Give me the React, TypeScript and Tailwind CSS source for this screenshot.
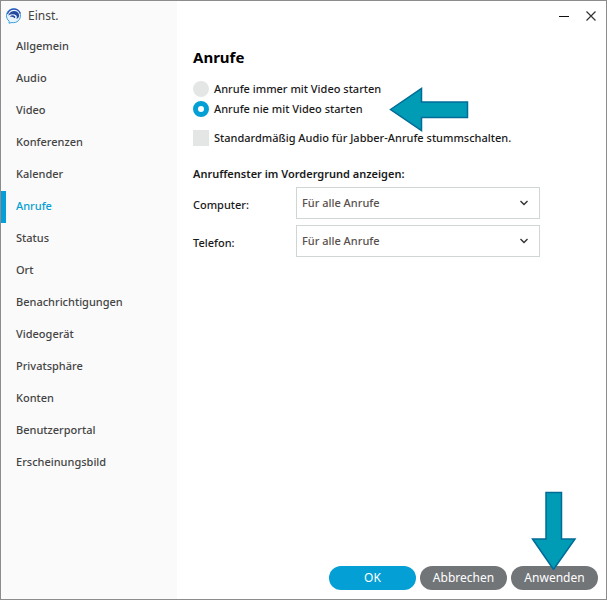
import { FC, useState } from 'react';

const sections = [
  'Allgemein',
  'Audio',
  'Video',
  'Konferenzen',
  'Kalender',
  'Anrufe',
  'Status',
  'Ort',
  'Benachrichtigungen',
  'Videogerät',
  'Privatsphäre',
  'Konten',
  'Benutzerportal',
  'Erscheinungsbild',
];

const foregroundOptions = ['Für alle Anrufe', 'Nur für Videoanrufe', 'Nie'];

const Logo: FC = () => (
  <svg className="size-4 shrink-0" viewBox="0 0 16 16" fill="none" aria-hidden="true">
    <path
      d="M3 15.2 3.2 13.2A7 7 0 1 1 6 14.5Z"
      fill="#e9f4fc"
      stroke="#3a9fdf"
      strokeWidth="1"
      strokeLinejoin="round"
    />
    <path d="M1.5 6A6.8 6.8 0 0 1 14.4 5.5" stroke="#2c4fb0" strokeWidth="1.2" />
    <path
      d="M2.2 7.4C3.4 4.4 6 3 8.6 3.1c3 .2 4.7 2.4 4.5 4.7-.1 1.7-1.2 2.8-2.8 3 .9-1.3.8-2.7-.3-3.600C8.2 5.7 5 5.9 2.2 7.4Z"
      fill="#264a9f"
    />
    <path d="M3.8 8.900C5.2 7.2 7.2 7 8.6 7.9c1 .7.9 2-.2 2.4C7.8 9.2 6 8.6 3.8 8.9Z" fill="#264a9f" />
  </svg>
);

interface RadioProps {
  label: string;
  checked: boolean;
  onChange: () => void;
}

const VideoRadio: FC<RadioProps> = ({ label, checked, onChange }) => (
  <label className="flex h-5 items-center gap-[5px]">
    <input
      type="radio"
      name="video"
      checked={checked}
      onChange={onChange}
      className="size-4 appearance-none rounded-full bg-[#e4e6e6] checked:border-5 checked:border-[#049fd4] checked:bg-white"
    />
    {label}
  </label>
);

interface SelectProps {
  id: string;
  label: string;
}

const ForegroundSelect: FC<SelectProps> = ({ id, label }) => (
  <div className="flex items-center">
    <label htmlFor={id} className="w-[103px] shrink-0 pt-1">
      {label}
    </label>
    <div className="relative max-w-[244px] flex-1">
      <select
        id={id}
        className="h-8 w-full appearance-none border border-[#d0d5d5] bg-white pr-8 pl-[5px] text-[#58504c]"
      >
        {foregroundOptions.map((option) => (
          <option key={option}>{option}</option>
        ))}
      </select>
      <svg
        className="pointer-events-none absolute top-3 right-3 h-2 w-2"
        viewBox="0 0 8 8"
        fill="none"
        stroke="#333"
        strokeWidth="1.4"
        aria-hidden="true"
      >
        <path d="M0.5 2 4 5.5 7.5 2" />
      </svg>
    </div>
  </div>
);

const App: FC = () => {
  const [active, setActive] = useState('Anrufe');
  const [withVideo, setWithVideo] = useState(false);

  return (
    <div className="flex min-h-screen border border-[#8c8c8c] bg-white font-['Noto_Sans',sans-serif] text-[11px] leading-4 font-medium text-[#1a1a1a]">
      {/* Sidebar */}
      <aside className="w-44 shrink-0 bg-[#fafafa] text-[#444]">
        <div className="flex h-[30px] items-center gap-[6px] pl-[5px]">
          <Logo />
          <span className="text-xs font-normal">Einst.</span>
        </div>
        <nav>
          {sections.map((section) => (
            <button
              key={section}
              onClick={() => setActive(section)}
              className={`block h-8 w-full border-l-5 pb-[2px] pl-[10px] text-left ${
                active === section ? 'border-[#049fd9] text-[#049fd4]' : 'border-transparent'
              }`}
            >
              {section}
            </button>
          ))}
        </nav>
      </aside>

      <div className="flex min-w-0 flex-1 flex-col">
        {/* Window controls */}
        <div className="flex h-[30px] items-center justify-end gap-[17px] pr-[10px]">
          <button aria-label="Minimieren">
            <svg className="size-[10px]" viewBox="0 0 10 10" stroke="#111" aria-hidden="true">
              <path d="M0 5.5H10" />
            </svg>
          </button>
          <button aria-label="Schließen">
            <svg className="size-[10px]" viewBox="0 0 10 10" stroke="#333" strokeWidth="1.2" aria-hidden="true">
              <path d="M0.5 0.5 9.5 9.5M9.5 0.5 0.5 9.5" />
            </svg>
          </button>
        </div>

        <main className="flex-1 px-4 pt-[14px]">
          <h1 className="mb-[10px] text-[15px] leading-6 font-bold text-black">{active}</h1>

          <div className="relative">
            <VideoRadio label="Anrufe immer mit Video starten" checked={withVideo} onChange={() => setWithVideo(true)} />
            <VideoRadio label="Anrufe nie mit Video starten" checked={!withVideo} onChange={() => setWithVideo(false)} />
            <svg
              className="pointer-events-none absolute top-2 left-[196px] h-[46px] w-20"
              viewBox="0 0 80 46"
              fill="#009bb5"
              stroke="#006b96"
              strokeWidth="1.5"
              aria-hidden="true"
            >
              <path d="M1.5 22.5 32.5 1.5V15H78.5V30.5H32.5V43.5Z" />
            </svg>
          </div>

          <label className="mt-[9px] flex h-5 items-center gap-[5px]">
            <input type="checkbox" className="size-4 appearance-none bg-[#e4e6e6] checked:bg-[#049fd4]" />
            Standardmäßig Audio für Jabber-Anrufe stummschalten.
          </label>

          <h2 className="mt-[18px] mb-[5px] font-semibold">Anruffenster im Vordergrund anzeigen:</h2>
          <div className="flex flex-col gap-[6px]">
            <ForegroundSelect id="computer" label="Computer:" />
            <ForegroundSelect id="telefon" label="Telefon:" />
          </div>
        </main>

        {/* Footer buttons */}
        <footer className="flex justify-end gap-1 pr-2 pb-[9px] text-xs font-normal text-white">
          <button className="h-6 w-[87px] rounded-full bg-[#049fd4]">OK</button>
          <button className="h-6 w-[87px] rounded-full bg-[#727578]">Abbrechen</button>
          <div className="relative">
            <button className="h-6 w-[87px] rounded-full bg-[#727578]">Anwenden</button>
            <svg
              className="pointer-events-none absolute bottom-5 left-5 h-20 w-[46px]"
              viewBox="0 0 46 80"
              fill="#009bb5"
              stroke="#006b96"
              strokeWidth="1.5"
              aria-hidden="true"
            >
              <path d="M15 2.5H30.5V49H44L22.5 79.5 1.5 49H15Z" />
            </svg>
          </div>
        </footer>
      </div>
    </div>
  );
};

export default App;
